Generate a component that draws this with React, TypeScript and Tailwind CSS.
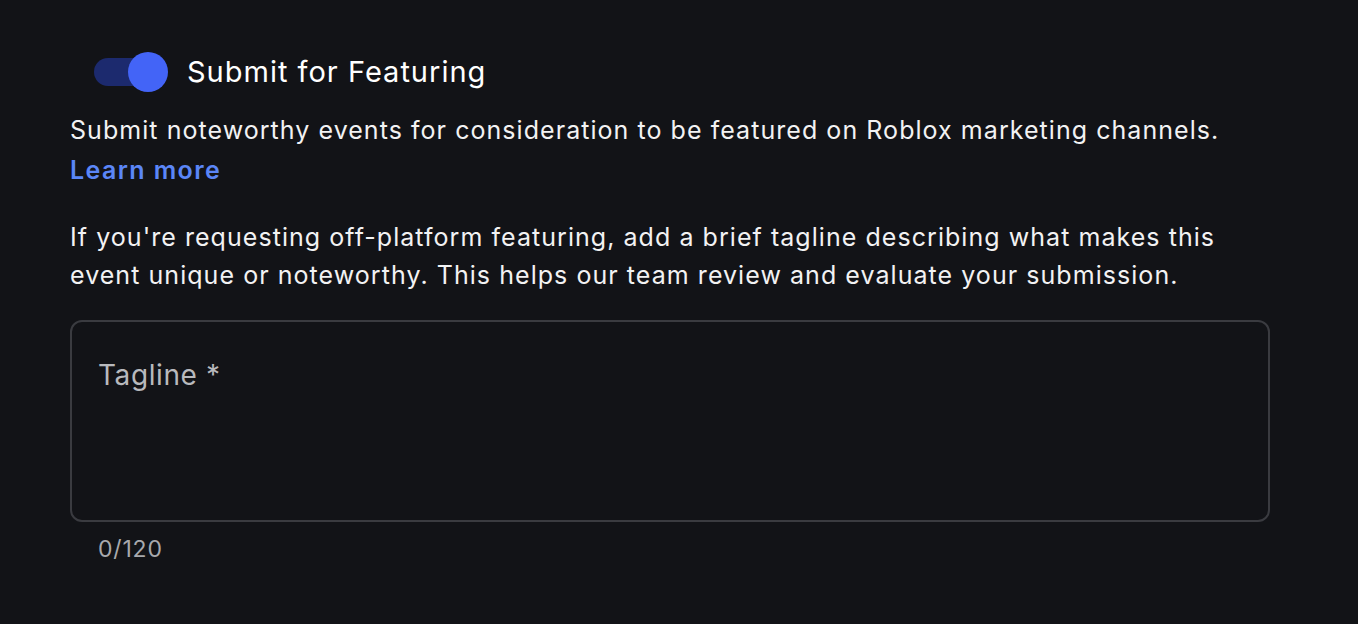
import { useState } from "react";

export default function App() {
  const [on, setOn] = useState(true);
  const [tagline, setTagline] = useState("");

  return (
    <div className="min-h-[624px] w-full bg-[#121317] pl-[70px] pt-[52px] font-['Inter','Noto_Sans',sans-serif] text-white">
      <div className="w-[1200px]">
        <label className="flex items-center gap-[19px] pl-[24px]">
          <button
            type="button"
            onClick={() => setOn(!on)}
            className="relative h-[40px] w-[74px] shrink-0"
            aria-pressed={on}
          >
            <span className="absolute left-0 top-[6px] h-[28px] w-[60px] rounded-full bg-[#1c2a6e]" />
            <span
              className={
                on
                  ? "absolute left-[34px] top-0 h-[40px] w-[40px] rounded-full bg-[#4364f7]"
                  : "absolute left-0 top-0 h-[40px] w-[40px] rounded-full bg-[#9aa0ad]"
              }
            />
          </button>
          <span className="text-[29px] leading-[40px] tracking-[1px]">Submit for Featuring</span>
        </label>

        <p className="mt-[18px] text-[25px] leading-[40px] tracking-[1.05px] text-[#f2f2f3]">
          Submit noteworthy events for consideration to be featured on Roblox marketing channels.
          <br />
          <a href="#" className="font-semibold tracking-[1.4px] text-[#5b86f7]">Learn more</a>
        </p>

        <p className="mt-[28px] text-[25px] leading-[38px] tracking-[1.05px] text-[#f2f2f3]">
          If you're requesting off-platform featuring, add a brief tagline describing what makes this
          event unique or noteworthy. This helps our team review and evaluate your submission.
        </p>

        <div className="mt-[26px] h-[202px] w-[1200px] rounded-[12px] border-2 border-[#3a3b40] px-[26px] pt-[36px]">
          <textarea
            value={tagline}
            onChange={(e) => setTagline(e.target.value.slice(0, 120))}
            placeholder="Tagline *"
            className="h-full w-full resize-none bg-transparent text-[28px] leading-[34px] tracking-[0.6px] text-white outline-none placeholder:text-[#b8b9bd]"
          />
        </div>
        <div className="mt-[12px] pl-[28px] text-[23px] leading-[30px] tracking-[0.8px] text-[#a8a9ad]">
          {tagline.length}/120
        </div>
      </div>
    </div>
  );
}
